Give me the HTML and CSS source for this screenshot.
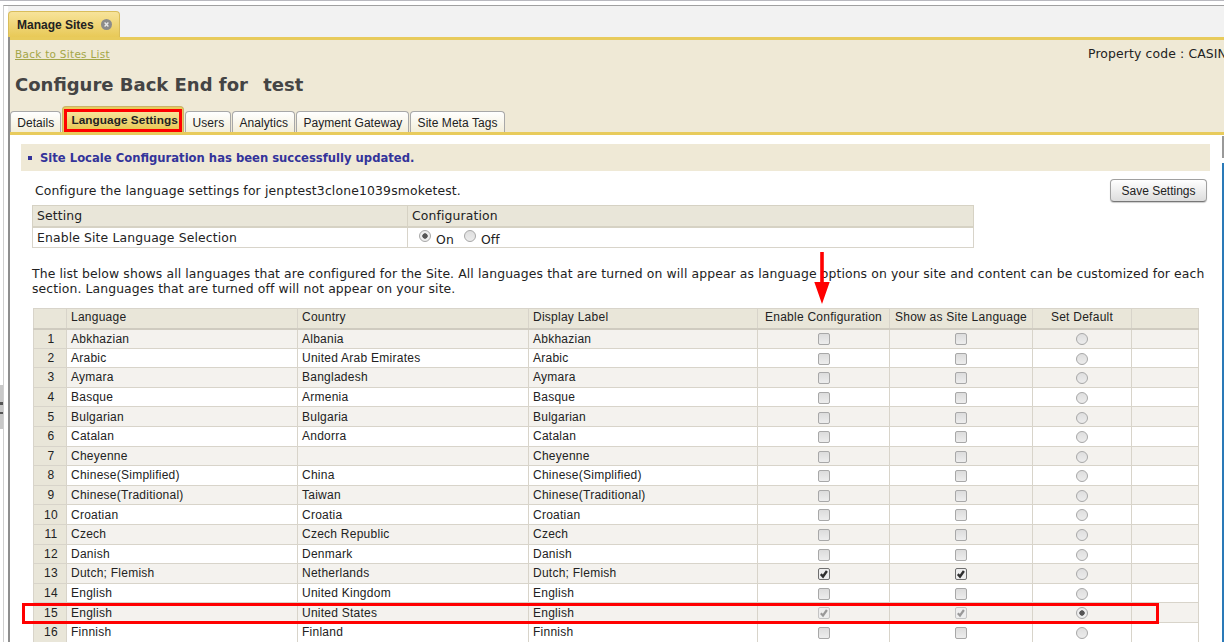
FILE: index.html
```html
<!DOCTYPE html>
<html lang="en">
<head>
<meta charset="utf-8">
<title>Configure Back End</title>
<link rel="stylesheet" href="styles.css">
</head>
<body>
<div class="shell">
  <div class="frame">
    <div class="tabbar">
      <div class="main-tab"><span>Manage Sites</span><span class="close"><svg width="11" height="11" viewBox="0 0 11 11"><circle cx="5.5" cy="5.5" r="5.5" fill="#8b8b8b"/><path d="M3.6 3.6l3.800 3.800M7.400 3.600l-3.800 3.800" stroke="#e8e8e8" stroke-width="1.4"/></svg></span></div>
    </div>
    <header class="panel">
      <div class="panel-top"><a class="back" href="#">Back to Sites List</a><div class="prop">Property code : CASINO</div></div>
      <h1 class="title">Configure Back End for <span class="gap"></span>test</h1>
      <nav class="subtabs">
        <a class="subtab" href="#">Details</a>
        <a class="subtab active" href="#"><span>Language Settings</span></a>
        <a class="subtab" href="#">Users</a>
        <a class="subtab" href="#">Analytics</a>
        <a class="subtab" href="#">Payment Gateway</a>
        <a class="subtab" href="#">Site Meta Tags</a>
      </nav>
    </header>
    <main class="content">
      <div class="notice"><span class="bullet"></span>Site Locale Configuration has been successfully updated.</div>
      <div class="config-row">
        <p class="config-text">Configure the language settings for jenptest3clone1039smoketest.</p>
        <button class="save" type="button">Save Settings</button>
      </div>
      <table class="settings">
        <colgroup><col class="s1"><col class="s2"></colgroup>
        <tr><th>Setting</th><th>Configuration</th></tr>
        <tr><td>Enable Site Language Selection</td><td class="onoff"><span class="radio sel"></span><span class="lab">On</span><span class="radio"></span><span class="lab">Off</span></td></tr>
      </table>
      <p class="intro">The list below shows all languages that are configured for the Site. All languages that are turned on will appear as language options on your site and content can be customized for each section. Languages that are turned off will not appear on your site.</p>
      <table class="langs">
        <colgroup><col class="c0"><col class="c1"><col class="c2"><col class="c3"><col class="c4"><col class="c5"><col class="c6"><col class="c7"></colgroup>
        <thead><tr><th></th><th>Language</th><th>Country</th><th>Display Label</th><th class="ctr">Enable Configuration</th><th class="ctr">Show as Site Language</th><th class="ctr">Set Default</th><th></th></tr></thead>
        <tbody>
          <tr><td class="num">1</td><td>Abkhazian</td><td>Albania</td><td>Abkhazian</td><td class="ctr"><span class="cb"></span></td><td class="ctr"><span class="cb"></span></td><td class="ctr"><span class="radio"></span></td><td></td></tr>
          <tr><td class="num">2</td><td>Arabic</td><td>United Arab Emirates</td><td>Arabic</td><td class="ctr"><span class="cb"></span></td><td class="ctr"><span class="cb"></span></td><td class="ctr"><span class="radio"></span></td><td></td></tr>
          <tr><td class="num">3</td><td>Aymara</td><td>Bangladesh</td><td>Aymara</td><td class="ctr"><span class="cb"></span></td><td class="ctr"><span class="cb"></span></td><td class="ctr"><span class="radio"></span></td><td></td></tr>
          <tr><td class="num">4</td><td>Basque</td><td>Armenia</td><td>Basque</td><td class="ctr"><span class="cb"></span></td><td class="ctr"><span class="cb"></span></td><td class="ctr"><span class="radio"></span></td><td></td></tr>
          <tr><td class="num">5</td><td>Bulgarian</td><td>Bulgaria</td><td>Bulgarian</td><td class="ctr"><span class="cb"></span></td><td class="ctr"><span class="cb"></span></td><td class="ctr"><span class="radio"></span></td><td></td></tr>
          <tr><td class="num">6</td><td>Catalan</td><td>Andorra</td><td>Catalan</td><td class="ctr"><span class="cb"></span></td><td class="ctr"><span class="cb"></span></td><td class="ctr"><span class="radio"></span></td><td></td></tr>
          <tr><td class="num">7</td><td>Cheyenne</td><td></td><td>Cheyenne</td><td class="ctr"><span class="cb"></span></td><td class="ctr"><span class="cb"></span></td><td class="ctr"><span class="radio"></span></td><td></td></tr>
          <tr><td class="num">8</td><td>Chinese(Simplified)</td><td>China</td><td>Chinese(Simplified)</td><td class="ctr"><span class="cb"></span></td><td class="ctr"><span class="cb"></span></td><td class="ctr"><span class="radio"></span></td><td></td></tr>
          <tr><td class="num">9</td><td>Chinese(Traditional)</td><td>Taiwan</td><td>Chinese(Traditional)</td><td class="ctr"><span class="cb"></span></td><td class="ctr"><span class="cb"></span></td><td class="ctr"><span class="radio"></span></td><td></td></tr>
          <tr><td class="num">10</td><td>Croatian</td><td>Croatia</td><td>Croatian</td><td class="ctr"><span class="cb"></span></td><td class="ctr"><span class="cb"></span></td><td class="ctr"><span class="radio"></span></td><td></td></tr>
          <tr><td class="num">11</td><td>Czech</td><td>Czech Republic</td><td>Czech</td><td class="ctr"><span class="cb"></span></td><td class="ctr"><span class="cb"></span></td><td class="ctr"><span class="radio"></span></td><td></td></tr>
          <tr><td class="num">12</td><td>Danish</td><td>Denmark</td><td>Danish</td><td class="ctr"><span class="cb"></span></td><td class="ctr"><span class="cb"></span></td><td class="ctr"><span class="radio"></span></td><td></td></tr>
          <tr><td class="num">13</td><td>Dutch; Flemish</td><td>Netherlands</td><td>Dutch; Flemish</td><td class="ctr"><span class="cb on"><svg viewBox="0 0 10 10"><path d="M1.800 5.200l2.200 2.300 3.900-5.500" fill="none" stroke="#2f2f2f" stroke-width="2.400"/></svg></span></td><td class="ctr"><span class="cb on"><svg viewBox="0 0 10 10"><path d="M1.800 5.200l2.200 2.300 3.900-5.500" fill="none" stroke="#2f2f2f" stroke-width="2.400"/></svg></span></td><td class="ctr"><span class="radio"></span></td><td></td></tr>
          <tr><td class="num">14</td><td>English</td><td>United Kingdom</td><td>English</td><td class="ctr"><span class="cb"></span></td><td class="ctr"><span class="cb"></span></td><td class="ctr"><span class="radio"></span></td><td></td></tr>
          <tr><td class="num">15</td><td>English</td><td>United States</td><td>English</td><td class="ctr"><span class="cb dis"><svg viewBox="0 0 10 10"><path d="M1.800 5.200l2.200 2.300 3.900-5.500" fill="none" stroke="#999" stroke-width="2.200"/></svg></span></td><td class="ctr"><span class="cb dis"><svg viewBox="0 0 10 10"><path d="M1.800 5.200l2.200 2.300 3.900-5.500" fill="none" stroke="#999" stroke-width="2.200"/></svg></span></td><td class="ctr"><span class="radio sel"></span></td><td></td></tr>
          <tr><td class="num">16</td><td>Finnish</td><td>Finland</td><td>Finnish</td><td class="ctr"><span class="cb"></span></td><td class="ctr"><span class="cb"></span></td><td class="ctr"><span class="radio"></span></td><td></td></tr>
        </tbody>
      </table>
    </main>
  </div>
</div>
<div class="mark-row"></div>
<svg class="arrow" width="18" height="54" viewBox="0 0 18 54"><path d="M7.200 0h3.600v30h5.900L9 52 1.300 30h5.900z" fill="#f00"/></svg>
<div class="handle"></div>
<div class="edge-gray"></div>
<div class="edge-blue"></div>
</body>
</html>
```
FILE: styles.css
```css
html, body { margin: 0; height: 642px; overflow: hidden; background: #fff; }
body { position: relative; font-family: "Liberation Sans", Arial, sans-serif; font-size: 12px; color: #222; border-top: 1px solid #b9b9bf; box-sizing: border-box; }

.shell { margin: 4px 0 0 3px; border-left: 1px solid #cfcfcf; border-top: 1px solid #a0a0a0; padding-left: 4px; }
.frame { border-left: 2px solid #8f8f8f; margin-top: 6px; }

.tabbar { height: 25px; margin-top: -6px; padding-top: 6px; margin-left: -2px; background: #f2f2f2; display: flex; align-items: flex-end; }
.main-tab { box-sizing: border-box; width: 112px; height: 26px; padding-left: 8px; display: flex; align-items: center; gap: 7px; background: linear-gradient(#f7e39a, #e8c957); border: 1px solid #d9bd5b; border-bottom: 0; border-radius: 4px 4px 0 0; font-weight: bold; color: #222; }
.close { display: flex; }

.panel { background: #efe9d6; border-top: 3px solid #e8cb5c; border-bottom: 3px solid #e8cb5c; height: 92px; display: flex; flex-direction: column; }
.panel-top { display: flex; padding: 5px 0 0 5px; height: 19px; }
.back { font: 10.5px "DejaVu Sans", Verdana, sans-serif; color: #a4a648; padding-top: 3px; letter-spacing: .27px; }
.prop { margin-left: auto; width: 136px; overflow: hidden; white-space: nowrap; padding-top: 1px; font: 12.4px "DejaVu Sans", Verdana, sans-serif; letter-spacing: .13px; color: #222; }
.title { margin: 10px 0 0 5px; font: bold 18px "DejaVu Sans", Verdana, sans-serif; color: #444; height: 22px; line-height: 22px; }
.gap { display: inline-block; width: 9px; }

.subtabs { margin-top: auto; display: flex; align-items: flex-end; gap: 1px; }
.subtab { box-sizing: border-box; height: 21px; padding: 3px 6.2px 0; background: linear-gradient(#fff, #f3eed9); border: 1px solid #a8a8a8; border-bottom: 0; border-radius: 4px 4px 0 0; color: #222; text-decoration: none; line-height: 16px; letter-spacing: .05px; }
.subtab.active { height: 26px; width: 122px; padding: 2px 1px 0; background: #e8cb5c; border-color: #c9b368; }
.subtab.active span { box-sizing: border-box; display: block; height: 23px; padding: 1px 4px 0; line-height: 15px; border: 3px solid #f00; background: linear-gradient(#f7e39a, #e8c957); font-weight: bold; white-space: nowrap; font-size: 11.8px; }

.content { padding: 9px 14px 0 11px; }
.notice { height: 27px; width: 1189px; display: flex; align-items: center; gap: 8px; padding-left: 7px; box-sizing: border-box; background: #efe9d6; font: bold 11.6px "DejaVu Sans", Verdana, sans-serif; color: #33339a; }
.bullet { width: 4px; height: 4px; background: #33339a; }

.config-row { display: flex; justify-content: space-between; height: 34px; padding: 8px 3px 0 14px; box-sizing: border-box; width: 1189px; }
.config-text { margin: 4px 0 0; font: 12.4px "DejaVu Sans", Verdana, sans-serif; letter-spacing: .16px; color: #222; }
.save { width: 97px; height: 23px; padding: 0; background: linear-gradient(#fff, #ddd); border: 1px solid #a0a0a0; border-bottom-color: #777; border-radius: 4px; font: 12px "Liberation Sans", Arial, sans-serif; color: #222; box-shadow: 0 1px 1px #ccc; }

.settings { margin-left: 11px; width: 942px; table-layout: fixed; border-collapse: collapse; font: 12.4px/14px "DejaVu Sans", Verdana, sans-serif; letter-spacing: .13px; }
.s1 { width: 375px; }
.settings th { height: 21px; padding: 1px 4px 0; box-sizing: border-box; text-align: left; font-weight: normal; background: #e9e6d9; border: 1px solid #d6d2c4; border-bottom-width: 2px; }
.settings td { height: 21px; padding: 2px 4px 0; box-sizing: border-box; border: 1px solid #d8d4ca; }
.onoff { white-space: nowrap; }
.onoff .radio { margin-left: 7px; vertical-align: -1px; position: relative; top: -1px; }
.lab { margin-left: 5px; margin-right: 3px; position: relative; top: 2px; }

.intro { margin: 18px 0 0 11px; width: 1178px; font: 12.4px/15px "DejaVu Sans", Verdana, sans-serif; letter-spacing: .11px; color: #222; }

.langs { margin: 12px 0 0 12px; width: 1165px; table-layout: fixed; border-collapse: collapse; letter-spacing: .25px; }
.c0 { width: 33px; } .c1 { width: 231px; } .c2 { width: 231px; } .c3 { width: 229px; } .c4 { width: 132px; } .c5 { width: 143px; } .c6 { width: 99px; } .c7 { width: 67px; }
.langs th { height: 20px; padding: 0 4px 2px; box-sizing: border-box; font-weight: normal; text-align: left; background: #e9e6d9; border: 1px solid #d8d4ca; border-bottom-width: 2px; border-bottom-color: #cfcbc0; white-space: nowrap; }
.langs th:first-child { border-right: 0; }
.langs th.ctr { text-align: center; padding: 0 0 2px; }
.langs td { height: 19.6px; padding: 0 4px; box-sizing: border-box; border: 1px solid #d8d4ca; white-space: nowrap; }
.langs .ctr { text-align: center; padding: 0; }
.langs tbody tr:nth-child(odd) td { background: #f4f2ee; }
.langs td.num, .langs tbody tr:nth-child(odd) td.num { background: #e9e6d9; text-align: center; border-right: 0; padding: 0 0 0 2px; }

.cb { display: inline-block; box-sizing: border-box; width: 12px; height: 12px; vertical-align: middle; background: linear-gradient(#dcdcdc, #ededed); border: 1px solid #a8a8a8; border-radius: 2px; }
.cb svg { display: block; width: 10px; height: 10px; }
.cb.on { border-color: #6e6e6e; background: #eee; }
.cb.dis { border-color: #c4c4c4; background: #eee; }
.radio { display: inline-block; box-sizing: border-box; width: 12px; height: 12px; vertical-align: middle; border-radius: 50%; background: linear-gradient(#dedede, #ececec); border: 1px solid #a8a8a8; }
.radio.sel { background: radial-gradient(circle, #555 0 2.4px, #eee 3px); }

.mark-row { position: absolute; left: 22px; top: 602px; width: 1137px; height: 21px; box-sizing: border-box; border: 3px solid #f00; }
.arrow { position: absolute; left: 813px; top: 251px; }
.handle { position: absolute; left: 0; top: 384px; width: 3px; height: 44px; background: linear-gradient(#c8c8c8 0 17px, #555 17px 20px, #c8c8c8 20px 27px, #555 27px 29px, #c8c8c8 29px); }
.edge-gray { position: absolute; left: 1222px; top: 135px; width: 2px; height: 22px; background: #999; }
.edge-blue { position: absolute; left: 1222px; top: 162px; width: 2px; height: 480px; background: #2a7ab8; }
```
